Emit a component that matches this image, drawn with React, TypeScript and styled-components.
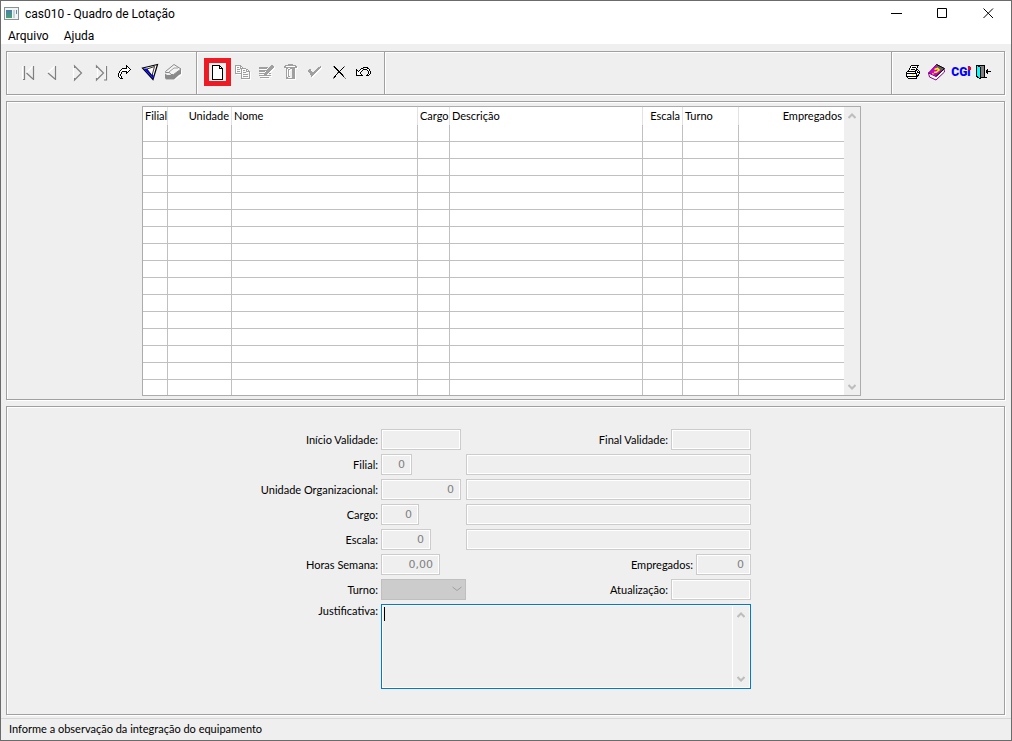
import React from "react";
import styled, { createGlobalStyle, css } from "styled-components";

const face = "#efefef";
const line = "#a0a0a0";
const gridLine = "#c0c0c0";
const uiFont = `Lato, "Liberation Sans", sans-serif`;
const captionFont = `Roboto, "Noto Sans", sans-serif`;

const GlobalStyle = createGlobalStyle`
  *, *::before, *::after { box-sizing: border-box; }
  body { margin: 0; background: ${face}; }
`;

const groove = css`
  border: 1px solid ${line};
  box-shadow: 1px 1px 0 #fff, inset 1px 1px 0 #fff;
`;

const Window = styled.div`
  min-height: 100vh;
  display: flex;
  flex-direction: column;
  border: 1px solid #6b6b6b;
  background: ${face};
  color: #000;
  font: 11px/16px ${uiFont};
`;

const TitleBar = styled.header`
  display: flex;
  align-items: center;
  height: 25px;
  padding-left: 3px;
  background: #fff;
  font: 12px/16px ${captionFont};
`;

const Title = styled.h1`
  margin: 0 0 0 6px;
  flex: 1;
  font: inherit;
`;

const CaptionButton = styled.button`
  width: 46px;
  height: 25px;
  padding: 0;
  border: 0;
  background: none;
  display: grid;
  place-items: center;
`;

const MenuBar = styled.nav`
  display: flex;
  gap: 15px;
  height: 18px;
  padding-left: 7px;
  background: #fff;
  font: 12px/20px ${captionFont};
`;

const MenuLink = styled.a`
  color: #000;
  text-decoration: none;
`;

const Body = styled.main`
  flex: 1;
  display: flex;
  flex-direction: column;
  gap: 6px;
  padding: 7px 6px 3px 5px;
`;

const Toolbar = styled.div`
  ${groove}
  display: flex;
  height: 44px;
`;

const ToolGroup = styled.div<{ $pad: number; $end?: number; $grow?: boolean }>`
  display: flex;
  align-items: center;
  flex: ${(p) => (p.$grow ? "1" : "none")};
  padding: 0 ${(p) => p.$end ?? 0}px 2px ${(p) => p.$pad}px;
  & + & {
    border-left: 1px solid ${line};
    box-shadow: inset 1px 0 0 #fff;
  }
`;

const ToolButton = styled.button<{ $marked?: boolean }>`
  width: ${(p) => (p.$marked ? 27 : 24)}px;
  height: ${(p) => (p.$marked ? 28 : 22)}px;
  padding: 0;
  border: ${(p) => (p.$marked ? "5px solid #ed1c24" : "0")};
  background: none;
  display: grid;
  place-items: center;
`;

const Logo = styled.span`
  position: relative;
  color: #00f;
  font: 900 12px/16px Roboto, sans-serif;
  &::after {
    content: "";
    position: absolute;
    top: 3px;
    right: 0;
    width: 3px;
    height: 3px;
    background: #f00;
  }
`;

const Panel = styled.section<{ $top: number; $bottom: number; $right?: number; $grow?: boolean }>`
  ${groove}
  flex: ${(p) => (p.$grow ? "1" : "none")};
  padding: ${(p) => p.$top}px ${(p) => p.$right ?? 0}px ${(p) => p.$bottom}px 0;
`;

const GridBox = styled.div`
  display: flex;
  width: 719px;
  height: 290px;
  margin: 0 auto;
  border: 1px solid #acacac;
  background: #fff;
  overflow: hidden;
`;

const Table = styled.table`
  width: 701px;
  flex: none;
  table-layout: fixed;
  border-collapse: separate;
  border-spacing: 0;
`;

const HeadCell = styled.th<{ $right?: boolean }>`
  height: 18px;
  padding: 0 2px;
  border-right: 1px solid #e2e2e2;
  font-weight: 400;
  line-height: 18px;
  white-space: nowrap;
  text-align: ${(p) => (p.$right ? "right" : "left")};
  &:last-child { border-right: 0; }
`;

const Cell = styled.td`
  height: 17px;
  padding: 0;
  border-right: 1px solid ${gridLine};
  border-bottom: 1px solid ${gridLine};
  &:last-child { border-right: 0; }
`;

const Scroll = styled.div`
  width: 16px;
  margin-left: auto;
  padding: 6px 0 5px;
  display: flex;
  flex-direction: column;
  align-items: center;
  justify-content: space-between;
  background: ${face};
`;

const Form = styled.form`
  width: 491px;
  margin: 0 auto;
  display: grid;
  grid-template-columns: 118px 370px;
  column-gap: 3px;
  row-gap: 4px;
`;

const Label = styled.label<{ $tall?: boolean }>`
  height: 21px;
  text-align: right;
  line-height: ${(p) => (p.$tall ? 14 : 22)}px;
  white-space: nowrap;
`;

const Fields = styled.div`
  display: flex;
  justify-content: space-between;
  height: 21px;
`;

const Pair = styled.div`
  display: flex;
  gap: 3px;
`;

const Input = styled.input<{ $w: number }>`
  width: ${(p) => p.$w}px;
  height: 21px;
  padding: 0 6px;
  border: 1px solid #ccc;
  border-radius: 0;
  box-shadow: inset 0 0 0 1px #fff;
  background: ${face};
  color: #808080;
  font: 11px/16px "DejaVu Sans", sans-serif;
  text-align: right;
  outline: 0;
`;

const SelectBox = styled.div`
  position: relative;
  svg { position: absolute; right: 4px; top: 7px; pointer-events: none; }
`;

const Select = styled.select`
  appearance: none;
  display: block;
  width: 85px;
  height: 21px;
  border: 1px solid #bfbfbf;
  border-radius: 0;
  background: #ccc;
  opacity: 1;
`;

const NoteBox = styled.div`
  position: relative;
  display: flex;
  height: 85px;
  padding: 1px;
  border: 1px solid #0078d7;
  background: #fff;
`;

const Note = styled.textarea`
  flex: 1;
  min-width: 0;
  margin-right: 1px;
  padding: 1px 2px;
  border: 0;
  outline: 0;
  resize: none;
  background: ${face};
  font: inherit;
`;

const Caret = styled.span`
  position: absolute;
  left: 2px;
  top: 2px;
  width: 1px;
  height: 14px;
  background: #000;
`;

const StatusBar = styled.footer`
  height: 22px;
  padding: 2px 8px;
  border-top: 1px solid #d7d7d7;
`;

const palette: Record<string, string> = { k: "#000", a: "#a0a0a0", w: "#fff", g: "#808080", c: "#00ffff", y: "#ffff00" };

function Pixels({ rows, x = 0, y = 0, w = 24, h = 22, emboss }: { rows: string[]; x?: number; y?: number; w?: number; h?: number; emboss?: boolean }) {
  const dots = (dx: number, fill?: string) =>
    rows.flatMap((row, r) =>
      [...row].map((ch, c) =>
        ch === "." ? null : <rect key={`${dx}-${r}-${c}`} x={x + c + dx} y={y + r + dx} width="1" height="1" fill={fill ?? palette[ch]} />
      )
    );
  return (
    <svg width={w} height={h} shapeRendering="crispEdges" aria-hidden>
      {emboss && dots(1, "#fff")}
      {dots(0)}
    </svg>
  );
}

function Strokes({ light, dark }: { light: string; dark: string }) {
  return (
    <svg width="24" height="22" fill="none" strokeWidth="1.2" aria-hidden>
      <path d={light} stroke="#fff" />
      <path d={dark} stroke="#808080" />
    </svg>
  );
}

const redo = [
  "........k.....",
  "........kk....",
  "........kwk...",
  "....kkkkkwwk..",
  "...kwwwwwwwwk.",
  "..kwwwwwwwwk..",
  ".kwwkkkkkwk...",
  ".kwk....kk....",
  "kwwk....k.....",
  "kwk...........",
  "kwk...........",
  "kwwk..........",
  ".kwk..........",
  "..kkk.........",
];
const page = [
  "kkkkkkkk...",
  "kwwwwwwkk..",
  "kwwwwwwkwk.",
  "kwwwwwwkkkk",
  ...Array(10).fill("kwwwwwwwwwk"),
  "kkkkkkkkkkk",
];
const copy = [
  "aaaaaa..........",
  "a....aa.........",
  "a.aa.a.a........",
  "a....aaaaaa.....",
  "a.aaa.a....aa...",
  "a.....a.aa.a.a..",
  "a.aaa.a....aaaa.",
  "a.....a.aaa...a.",
  "aaaaaaa.......a.",
  "......a.aaaaa.a.",
  "......a.......a.",
  "......a.aaaaa.a.",
  "......a.......a.",
  "......aaaaaaaaa.",
];
const edit = [
  "............aa.",
  "...........aaaa",
  "aaaaaaaaa.aaaaa",
  "aaaaaaaa.aaaaa.",
  "........aaaaa..",
  "aaaaaaaaaaaa...",
  "aaaaaa.aaaa....",
  "......aaaa.....",
  "aaaaaaaaa.aa...",
  ".....aaa.......",
  "aaaaaaaaaaaa...",
  "...............",
  ".aaaaaaaaa.....",
];
const trash = [
  "....aaaaa....",
  ".aaaaaaaaaaa.",
  "aa.........aa",
  "aaaaaaaaaaaaa",
  "..aa..aaaaa..",
  "..a.aa..aaa..",
  "..a.a...aaa..",
  "..a.a...aaa..",
  "..a.a...aaa..",
  "..a.a...aaa..",
  "..a.a...aaa..",
  "..a.a...aaa..",
  "..a.aa..aaa..",
  "..aa....aaa..",
  "..aaaaaaaaa..",
];
const check = [
  "............a",
  "..........aaa",
  ".........aaa.",
  ".aa.....aaa..",
  "aaa....aaa...",
  "aaaa..aaa....",
  ".aaaaaaa.....",
  "..aaaaa......",
  "..aaaa.......",
  "...aa........",
  "...a.........",
];
const cross = [
  "gk.........g.",
  ".kk.......k..",
  "..kk.....k...",
  "...kk...k....",
  "....kk.k.....",
  ".....kk......",
  "....gkkk.....",
  "....k..kk....",
  "...k....kk...",
  "..k......kg..",
  ".kk.......k..",
  "gk.........g.",
  "g...........g",
];
const undo = [
  ".......kkkkk...",
  ".....kkgwwwkk..",
  "k...kwwkkkkwwk.",
  "kk.kwwk....kwk.",
  "kwkwwk......kwk",
  "kwwwk.......kwk",
  "kwwwk.......kwk",
  "kwwwwk.....kwk.",
  "kkkkkkk...kkk..",
];
const printer = [
  ".....kkkkkkkk.",
  "....kwwwwwwk..",
  "....kwkkkkwk..",
  "...kwwwwwwk...",
  "...kwkkkkwkk..",
  "..kwwwwwwkkwk.",
  ".kkkkkkkkkwkwk",
  "kwwwwwwwwkwkkk",
  "kkkkkkkkkkkwwk",
  "kwwwwwyywwkwk.",
  "kwwwwwwwwwkkk.",
  "kkkkkkkkkkkk..",
  ".kwwwwwwwwk...",
  "..kkkkkkkkk...",
];
const door = [
  "kkkkkkkkk......",
  "kckkggggk......",
  "kccckgggk......",
  "kccckgggk......",
  "kccckgggk..k...",
  "kccckgggk.kk...",
  "kccckgggk.kkkkk",
  "kccckgggk.kk...",
  "kccckgggk..k...",
  "kccckgggk......",
  "kccckgggk......",
  "kkcckgggk......",
  ".kkckkkkkkk....",
  "...kk..........",
];

function Funnel() {
  return (
    <svg width="24" height="22" aria-hidden>
      <path d="M6.5 7 21.500 3.500 17 18.500Z" fill="#fff" stroke="#000" strokeWidth="1.200" />
      <path d="M7.500 7.500 11 7.500 17.500 14.500V18Z" fill="#00f" />
      <path d="M11 8 18.500 5.500 16 14.500Z" fill="#fff" stroke="#000" strokeWidth="0.800" />
    </svg>
  );
}

function Eraser() {
  return (
    <svg width="24" height="22" aria-hidden>
      <path d="M6 14H14L22 9V14L15 19H6Z" fill="#fff" />
      <path d="M5 12.500 7 14H13L21 8V13L19 14 14 18.500H6L5 17Z" fill="#8a8a8a" />
      <path d="M5.500 10.500 14 3.500 21 8 13.500 13.500H11L9.500 11.500H5.500Z" fill="#f4f4f4" stroke="#8a8a8a" />
      <path d="M9 11 14 7H18" fill="none" stroke="#a0a0a0" />
    </svg>
  );
}

function Book() {
  return (
    <svg width="24" height="22" aria-hidden>
      <path d="M3.500 12 4.500 16 11 19 19.500 11 19 8Z" fill="#fff" stroke="#800080" />
      <path d="M3.500 12 11.500 3.500 19 7.500 11 15.500Z" fill="#d000d0" stroke="#800080" />
      <path d="M12 3.500 19 7.500 17 10 11 6Z" fill="#606060" />
      <path d="M11.500 3.500 19.500 7.500 11 15.500" fill="none" stroke="#000" />
      <path d="M9.500 8.500 12.500 7.500 14 9 11.500 11 9 11.500M8.500 12.500 7.500 13" fill="none" stroke="#ff0" strokeWidth="1.600" />
    </svg>
  );
}

function Chevron({ up, color = "#bdbdbd", w = 8, thick = 2 }: { up?: boolean; color?: string; w?: number; thick?: number }) {
  return (
    <svg width={w} height="6" viewBox={`0 0 ${w} 6`} fill="none" aria-hidden>
      <path d={up ? `M0.500 5 ${w / 2} 1.500 ${w - 0.5} 5` : `M0.500 1 ${w / 2} 4.500 ${w - 0.5} 1`} stroke={color} strokeWidth={thick} />
    </svg>
  );
}

const columns = [
  { name: "Filial", width: 25 },
  { name: "Unidade", width: 64, right: true },
  { name: "Nome", width: 186 },
  { name: "Cargo", width: 32 },
  { name: "Descrição", width: 193 },
  { name: "Escala", width: 40, right: true },
  { name: "Turno", width: 56 },
  { name: "Empregados", width: 105, right: true },
];

const lookups = [
  { id: "filial", label: "Filial:", width: 31 },
  { id: "unidade", label: "Unidade Organizacional:", width: 80 },
  { id: "cargo", label: "Cargo:", width: 38 },
  { id: "escala", label: "Escala:", width: 50 },
];

export default function App() {
  return (
    <Window>
      <GlobalStyle />
      <TitleBar>
        <svg width="15" height="13" aria-hidden>
          <defs>
            <linearGradient id="pane" x2="0" y2="1">
              <stop stopColor="#4a7fb0" />
              <stop offset="1" stopColor="#4aa070" />
            </linearGradient>
          </defs>
          <rect x=".5" y=".5" width="14" height="12" fill="#f4f4f4" stroke="#8a9299" />
          <rect x="2" y="3" width="6" height="8" fill="url(#pane)" />
          <rect x="9" y="3" width="2" height="8" fill="#c5d5dd" />
          <rect x="12" y="3" width="1" height="4" fill="#5a90a8" />
        </svg>
        <Title>cas010 - Quadro de Lotação</Title>
        <CaptionButton aria-label="Minimizar">
          <svg width="11" height="11" stroke="#000"><path d="M0 5.500H11" /></svg>
        </CaptionButton>
        <CaptionButton aria-label="Maximizar">
          <svg width="11" height="11" fill="none" stroke="#000"><path d="M.5.500H9.500V9.500H.5Z" /></svg>
        </CaptionButton>
        <CaptionButton aria-label="Fechar">
          <svg width="11" height="11" stroke="#000"><path d="M.5.500 10 10M10 .500.5 10" /></svg>
        </CaptionButton>
      </TitleBar>
      <MenuBar>
        <MenuLink href="#arquivo">Arquivo</MenuLink>
        <MenuLink href="#ajuda">Ajuda</MenuLink>
      </MenuBar>

      <Body>
        <Toolbar>
          <ToolGroup $pad={9} $end={12}>
            <ToolButton aria-label="Primeiro"><Strokes light="M6.500 5V18M10.500 11.500 17 5" dark="M7 18.500H8.500V5M10.500 12 17 18M17.500 5V19" /></ToolButton>
            <ToolButton aria-label="Anterior"><Strokes light="M8 11.500 15 5" dark="M8 12 15 18M15.500 5V19" /></ToolButton>
            <ToolButton aria-label="Próximo"><Strokes light="M9.500 5V19" dark="M10.500 17V19L17.500 12 10.500 5V7" /></ToolButton>
            <ToolButton aria-label="Último"><Strokes light="M9.500 19V5M17.500 5V18" dark="M8.500 17V19L15.500 12 8.500 5V7M18.500 5V19H16" /></ToolButton>
            <ToolButton aria-label="Ir para"><Pixels rows={redo} x={6} y={4} /></ToolButton>
            <ToolButton aria-label="Filtrar"><Funnel /></ToolButton>
            <ToolButton aria-label="Limpar filtro"><Eraser /></ToolButton>
          </ToolGroup>
          <ToolGroup $pad={7} $end={9}>
            <ToolButton $marked aria-label="Novo"><Pixels rows={page} w={11} h={15} /></ToolButton>
            <ToolButton aria-label="Copiar"><Pixels rows={copy} x={4} y={4} emboss /></ToolButton>
            <ToolButton aria-label="Editar"><Pixels rows={edit} x={4} y={4} emboss /></ToolButton>
            <ToolButton aria-label="Excluir"><Pixels rows={trash} x={5} y={3} emboss /></ToolButton>
            <ToolButton aria-label="Confirmar"><Pixels rows={check} x={5} y={5} emboss /></ToolButton>
            <ToolButton aria-label="Cancelar"><Pixels rows={cross} x={6} y={5} /></ToolButton>
            <ToolButton aria-label="Desfazer"><Pixels rows={undo} x={5} y={6} /></ToolButton>
          </ToolGroup>
          <ToolGroup $pad={0} $grow />
          <ToolGroup $pad={9} $end={7}>
            <ToolButton aria-label="Imprimir"><Pixels rows={printer} x={5} y={4} /></ToolButton>
            <ToolButton aria-label="Manual"><Book /></ToolButton>
            <ToolButton aria-label="CGi"><Logo>CGi</Logo></ToolButton>
            <ToolButton aria-label="Sair"><Pixels rows={door} x={3} y={4} /></ToolButton>
          </ToolGroup>
        </Toolbar>

        <Panel $top={4} $bottom={3} $right={8}>
          <GridBox>
            <Table>
              <colgroup>
                {columns.map((c) => <col key={c.name} width={c.width} />)}
              </colgroup>
              <thead>
                <tr>{columns.map((c) => <HeadCell key={c.name} $right={c.right}>{c.name}</HeadCell>)}</tr>
              </thead>
              <tbody>
                {Array.from({ length: 16 }, (_, r) => (
                  <tr key={r}>{columns.map((c) => <Cell key={c.name} />)}</tr>
                ))}
              </tbody>
            </Table>
            <Scroll><Chevron up /><Chevron /></Scroll>
          </GridBox>
        </Panel>

        <Panel $top={22} $bottom={25} $grow>
          <Form>
            <Label htmlFor="inicio">Início Validade:</Label>
            <Fields>
              <Input id="inicio" $w={80} readOnly />
              <Pair>
                <Label htmlFor="final">Final Validade:</Label>
                <Input id="final" $w={80} readOnly />
              </Pair>
            </Fields>
            {lookups.map((f) => (
              <React.Fragment key={f.id}>
                <Label htmlFor={f.id}>{f.label}</Label>
                <Fields>
                  <Input id={f.id} $w={f.width} defaultValue="0" readOnly />
                  <Input aria-label={`${f.label} descrição`} $w={285} readOnly />
                </Fields>
              </React.Fragment>
            ))}
            <Label htmlFor="horas">Horas Semana:</Label>
            <Fields>
              <Input id="horas" $w={59} defaultValue="0,00" readOnly />
              <Pair>
                <Label htmlFor="empregados">Empregados:</Label>
                <Input id="empregados" $w={55} defaultValue="0" readOnly />
              </Pair>
            </Fields>
            <Label htmlFor="turno">Turno:</Label>
            <Fields>
              <SelectBox>
                <Select id="turno" disabled />
                <Chevron w={10} color="#a0a0a0" thick={1} />
              </SelectBox>
              <Pair>
                <Label htmlFor="atualizacao">Atualização:</Label>
                <Input id="atualizacao" $w={80} readOnly />
              </Pair>
            </Fields>
            <Label htmlFor="justificativa" $tall>Justificativa:</Label>
            <NoteBox>
              <Note id="justificativa" />
              <Caret />
              <Scroll><Chevron up /><Chevron /></Scroll>
            </NoteBox>
          </Form>
        </Panel>
      </Body>
      <StatusBar>Informe a observação da integração do equipamento</StatusBar>
    </Window>
  );
}
